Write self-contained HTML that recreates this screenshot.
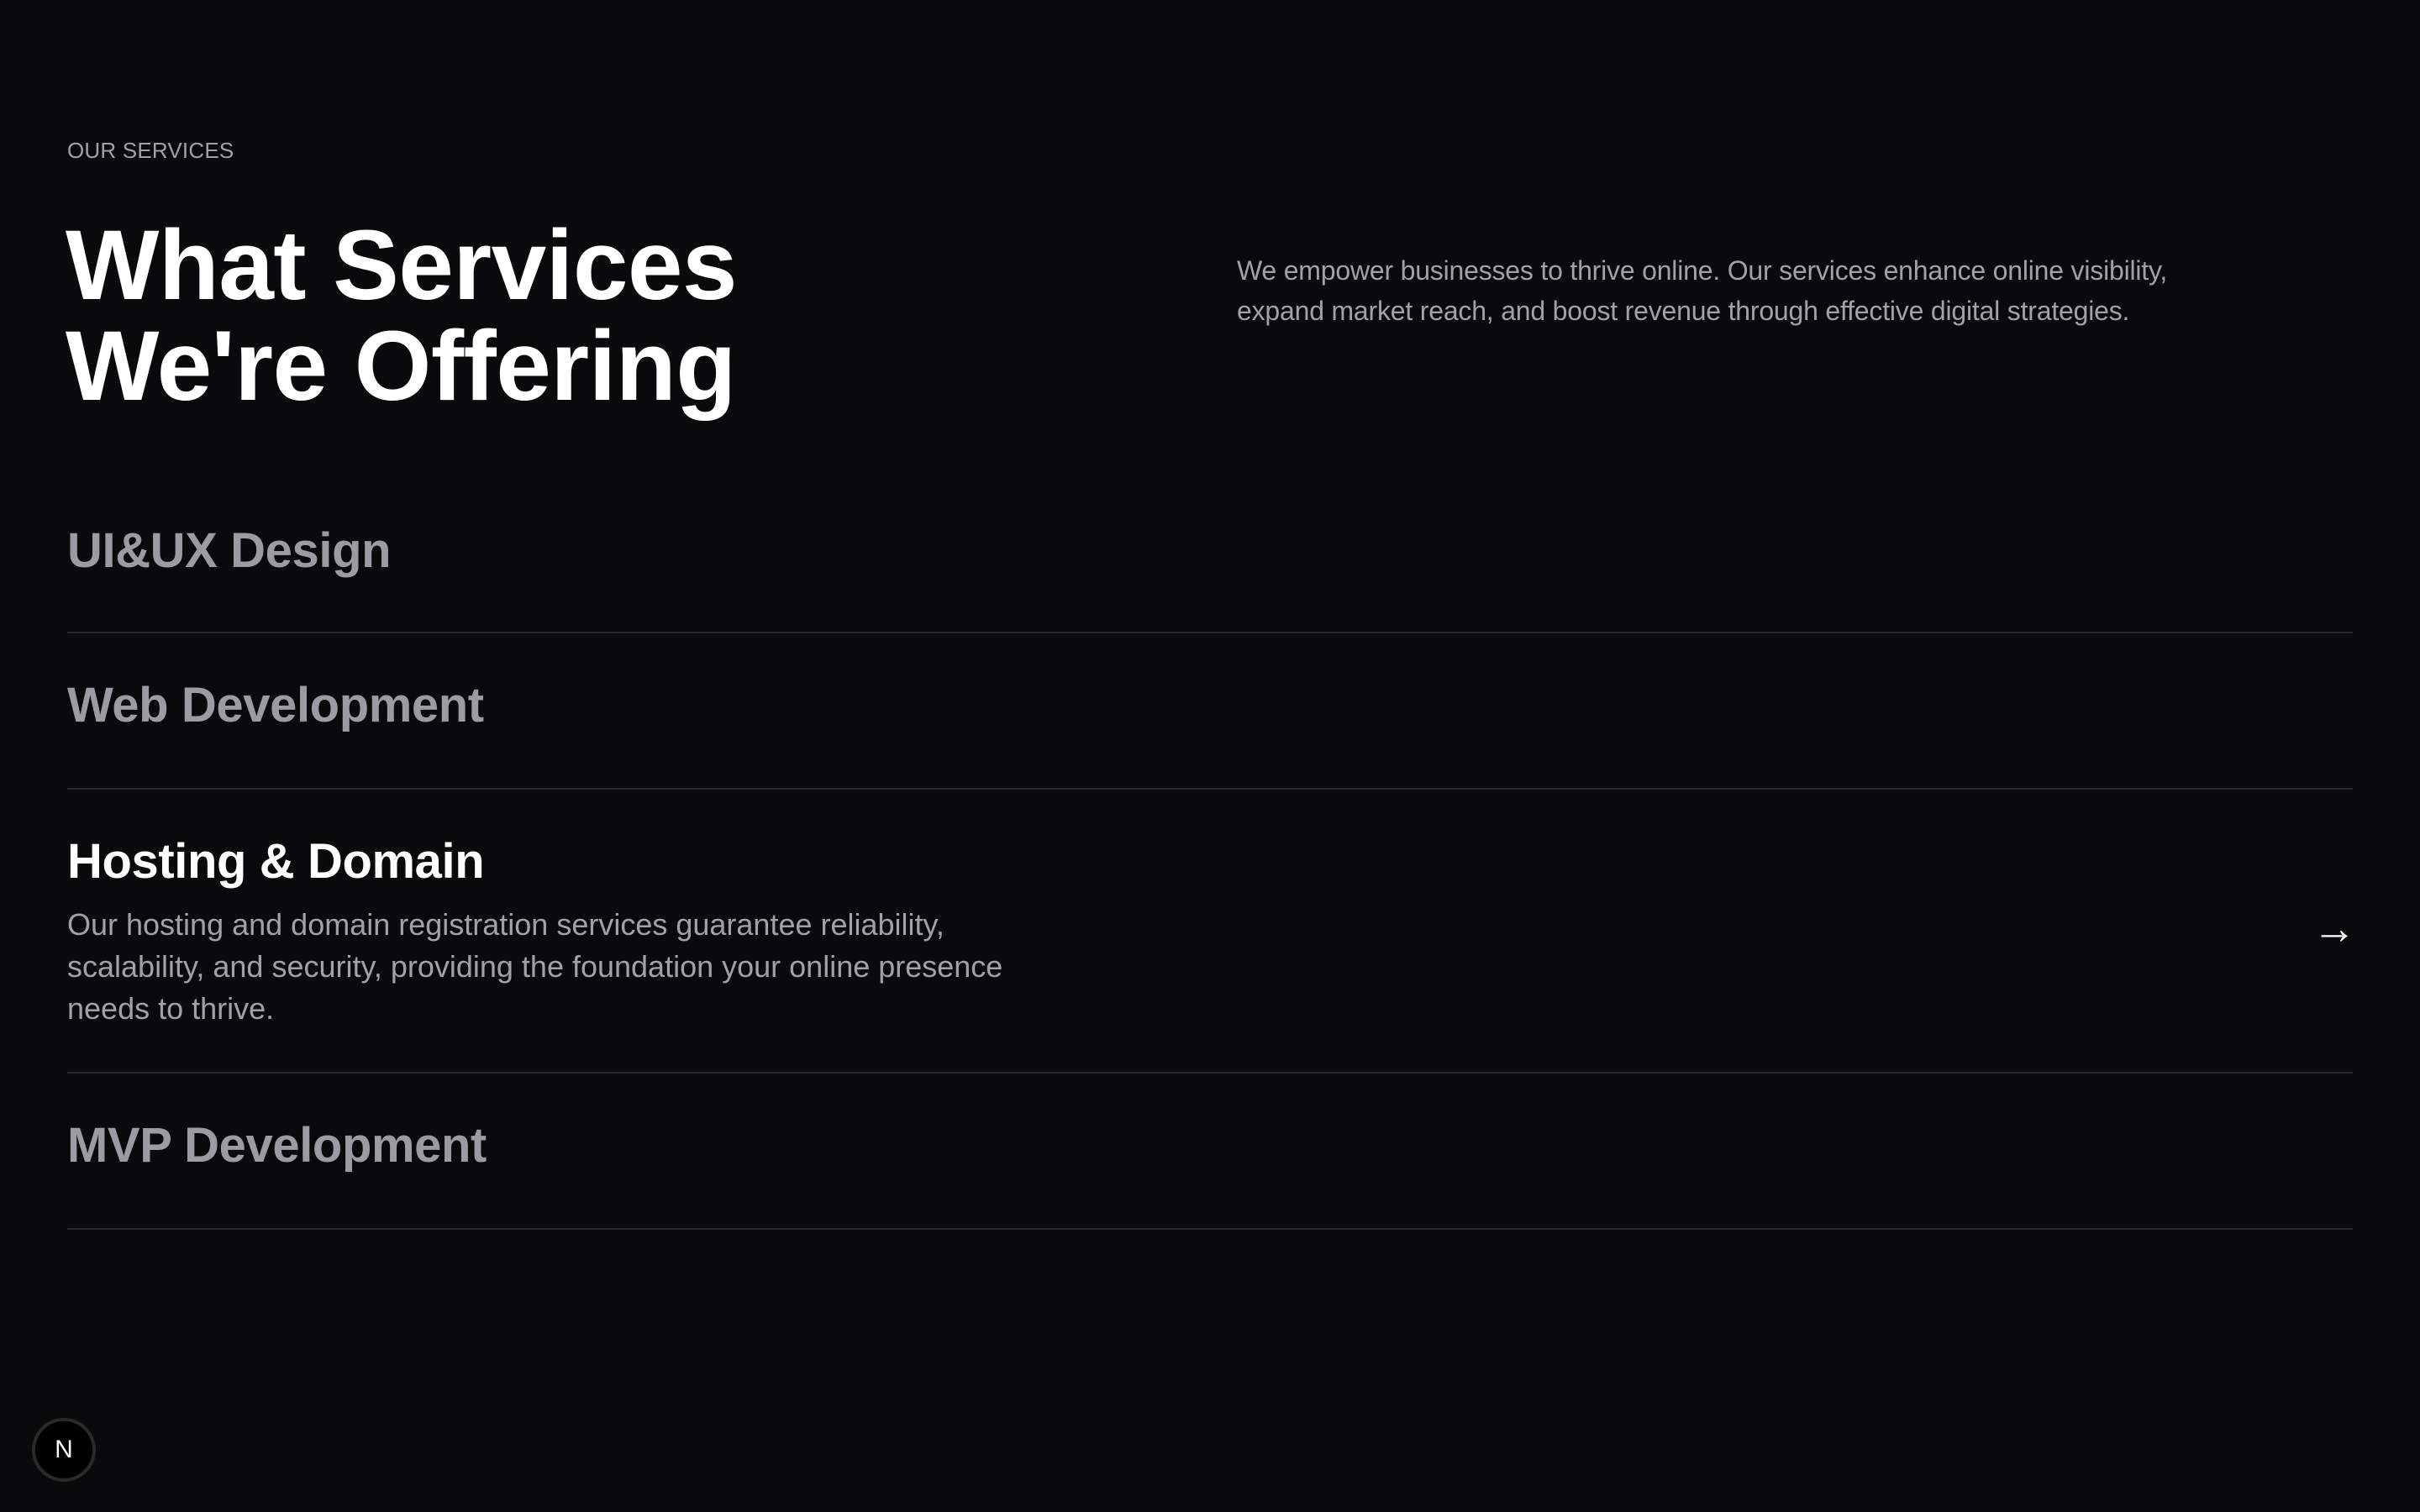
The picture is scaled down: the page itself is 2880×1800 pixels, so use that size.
<!DOCTYPE html>
<html><head><meta charset="utf-8"><style>
html,body{margin:0;padding:0;background:#0a0a0c;}
body{width:1440px;height:900px;zoom:2;position:relative;overflow:hidden;font-family:"Liberation Sans",sans-serif;}
.a{position:absolute;}
.tag{left:40px;top:82px;font-size:13px;color:#a1a1aa;letter-spacing:0.1px;}
h1{position:absolute;left:39px;top:128px;margin:0;font-size:59px;line-height:60px;color:#fff;font-weight:700;letter-spacing:-0.3px;}
.p{left:736px;top:149px;font-size:16px;line-height:24px;color:#a1a1aa;width:600px;letter-spacing:-0.1px;}
.t{left:40px;font-size:29px;color:#9b9ba3;font-weight:700;line-height:36px;letter-spacing:-0.2px;}
.line{left:40px;width:1360px;height:1px;background:#27272a;}
.d{left:40px;top:538px;font-size:18px;line-height:25px;color:#a1a1aa;width:580px;}
.badge{left:19px;top:844px;width:34px;height:34px;border-radius:50%;background:#000;border:2px solid #2a2a2a;color:#fff;font-size:15px;text-align:center;line-height:34px;}
</style></head><body>
<div class="a tag">OUR SERVICES</div>
<h1>What Services<br>We're Offering</h1>
<div class="a p">We empower businesses to thrive online. Our services enhance online visibility, expand market reach, and boost revenue through effective digital strategies.</div>
<div class="a t" style="top:310px">UI&amp;UX Design</div>
<div class="a line" style="top:376px"></div>
<div class="a t" style="top:402px">Web Development</div>
<div class="a line" style="top:469px"></div>
<div class="a t" style="top:495px;color:#fff">Hosting &amp; Domain</div>
<div class="a d">Our hosting and domain registration services guarantee reliability, scalability, and security, providing the foundation your online presence needs to thrive.</div>
<div class="a" style="left:1376px;top:538px;color:#fff;font-size:26px;line-height:30px">→</div>
<div class="a line" style="top:638px"></div>
<div class="a t" style="top:664px">MVP Development</div>
<div class="a line" style="top:731px"></div>
<div class="a badge">N</div>
</body></html>
